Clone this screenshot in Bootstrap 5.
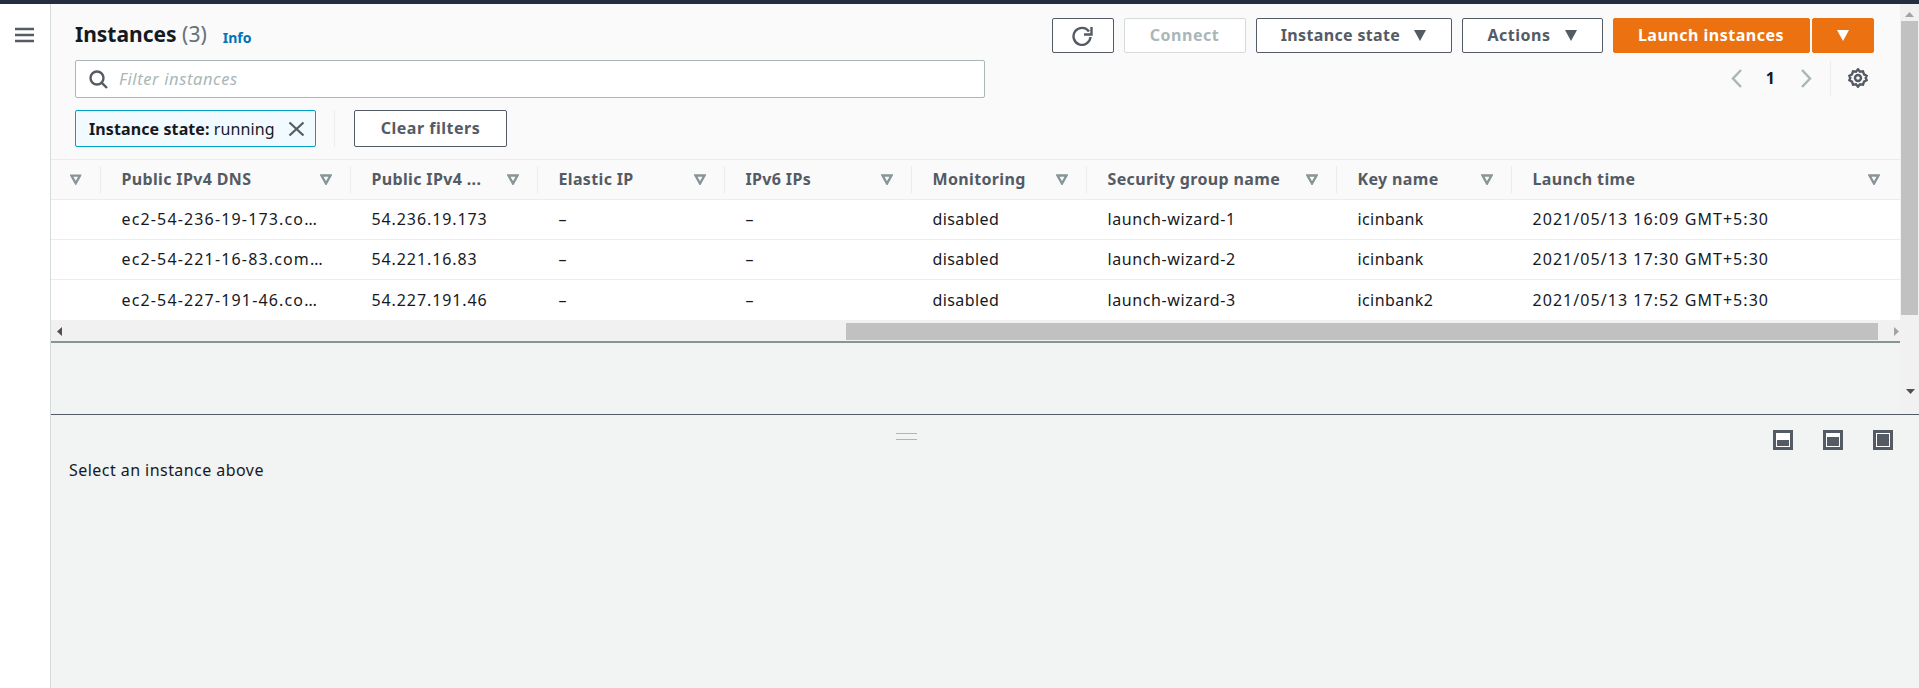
<!DOCTYPE html>
<html lang="en">
<head>
    <meta charset="UTF-8">
    <title>Instances</title>
    <link href="https://cdn.jsdelivr.net/npm/bootstrap@5.3.3/dist/css/bootstrap.min.css" rel="stylesheet">
    <style>
        html, body { height: 688px; overflow: hidden; }
        body { font-family: "Noto Sans", "Liberation Sans", sans-serif; font-size: 16px; letter-spacing: .4px; color: #16191f; background: #fff; }
        .top-strip { height: 4px; background: #232f3e; }
        .app-shell { height: 684px; }
        .side-nav { width: 51px; background: #fff; border-right: 1px solid #d5dbdb; padding: 17px 0 0 15px; }
        .main-area { min-width: 0; }
        .upper-pane { height: 410px; }
        .list-area { min-width: 0; background: #f2f3f3; }
        .list-head { height: 156px; background: #fafafa; padding: 14px 26px 0 24px; border-bottom: 1px solid #eaeded; }
        .head-row { height: 35px; }
        .page-title { font-size: 21px; font-weight: 700; line-height: 30px; margin: 0 0 3px; letter-spacing: 0; }
        .page-title span { font-weight: 400; color: #687078; }
        .info-link { font-size: 14px; font-weight: 700; color: #0073bb; text-decoration: none; margin-left: 16px; padding-top: 3px; letter-spacing: 0; }
        .btn-gap { gap: 10px; }
        .aws-btn { height: 35px; border: 1px solid #545b64; border-radius: 2px; background: #fff; color: #545b64; font-weight: 700; font-size: 16px; letter-spacing: .5px; padding: 0 0 2px; display: inline-flex; align-items: center; justify-content: center; gap: 14px; white-space: nowrap; }
        .aws-btn svg { margin-top: 2px; }
        .aws-btn.is-off { border-color: #d5dbdb; color: #aab7b8; }
        .aws-btn.is-orange { background: #ec7211; border-color: #ec7211; color: #fff; }
        .w-refresh { width: 62px; }
        .w-connect { width: 122px; }
        .w-state { width: 196px; letter-spacing: .35px; }
        .w-actions { width: 141px; }
        .w-launch { width: 197px; margin-right: 2px; }
        .w-drop { width: 62px; }
        .filter-row { margin-top: 7px; height: 38px; }
        .filter-box { width: 910px; height: 38px; border: 1px solid #aab7b8; border-radius: 2px; background: #fff; padding-left: 13px; gap: 11px; color: #aab7b8; font-style: italic; font-size: 16.5px; letter-spacing: .6px; }
        .pager { height: 36px; padding-right: 6px; }
        .pager-num { width: 22px; text-align: center; font-weight: 700; color: #16191f; margin: 0 19.5px 0 17.5px; }
        .pager-sep { width: 1px; height: 35px; background: #eaeded; margin: 0 17px 0 17.5px; }
        .chips-row { margin-top: 12px; height: 37px; }
        .filter-chip { width: 241px; height: 37px; border: 1px solid #00a1c9; border-radius: 2px; background: #f1faff; padding-left: 13px; gap: 13px; white-space: nowrap; letter-spacing: .1px; }
        .filter-chip b { font-weight: 700; }
        .chip-sep { width: 1px; height: 37px; background: #eaeded; margin: 0 19px 0 18px; }
        .w-clear { width: 153px; height: 37px; }
        .inst-table { table-layout: fixed; width: 1848.5px; margin: 0; --bs-table-bg: #fff; }
        .inst-table th, .inst-table td { padding: 0; border-color: #eaeded; overflow: hidden; white-space: nowrap; vertical-align: middle; }
        .inst-table thead th { height: 39px; background: #fafafa; color: #545b64; font-weight: 700; font-size: 16px; letter-spacing: .35px; border-bottom: 1px solid #eaeded; }
        .inst-table tbody td { height: 40px; color: #16191f; font-weight: 400; padding-left: 21px; }
        .inst-table tbody tr:last-child td { height: 41px; border-bottom: 0; }
        .inst-table tbody td.dns-cell { letter-spacing: 1.15px; }
        .inst-table tbody td.ip-cell { letter-spacing: .9px; }
        .inst-table tbody td.date-cell { letter-spacing: 1.05px; }
        .inst-table tbody td.sg-cell { letter-spacing: .6px; }
        .col-check { width: 49.5px; }
        .col-wide { width: 250px; }
        .col-mid { width: 187px; }
        .col-short { width: 175px; }
        .head-cell { height: 27px; padding: 0 18px 0 21px; border-right: 1px solid #eaeded; }
        .head-cell.no-sep { border-right: 0; padding-right: 20px; }
        .head-cell.first-cell { padding: 0 18px 0 19px; justify-content: center; }
        .hbar { height: 23px; background: #f1f1f1; border-bottom: 2px solid #879596; padding-top: 2px; padding-bottom: 1px; }
        .hbar-thumb { width: 1031.5px; height: 17px; background: #c1c1c1; margin-left: 784px; margin-right: 10px; }
        .hbar-arrow { width: 5px; height: 9px; margin-left: 6px; }
        .vbar { width: 19.5px; background: #f1f1f1; padding: 8px 0 0 1.5px; }
        .vbar-thumb { width: 17px; height: 294px; background: #c1c1c1; margin-top: 4px; }
        .vbar-down { margin-top: 74px; margin-left: 5px; }
        .lower-pane { height: 274px; background: #f2f3f3; border-top: 1px solid #545b64; padding: 15px 26px 0 18px; }
        .pane-top { height: 20px; }
        .drag-grip { width: 21px; height: 7px; border-top: 1px solid #aab7b8; border-bottom: 1px solid #aab7b8; margin: 3px 0 0 827px; }
        .pane-tools { gap: 30px; }
        .empty-msg { margin-top: 8px; color: #16191f; letter-spacing: .45px; }
    </style>
</head>
<body>
<svg width="0" height="0" class="d-none">
    <symbol id="caretFill" viewBox="0 0 12 11"><path d="M0 0h12L6 11z" fill="currentColor"/></symbol>
    <symbol id="caretOpen" viewBox="0 0 12 11"><path d="M1.5 1.5h9L6 9.5z" fill="none" stroke="#879596" stroke-width="2.4"/></symbol>
</svg>

<div class="top-strip"></div>
<div class="app-shell d-flex">
    <div class="side-nav flex-shrink-0">
        <svg width="19" height="16" viewBox="0 0 19 16"><path d="M0 2h19M0 8h19M0 14h19" stroke="#545b64" stroke-width="2.5"/></svg>
    </div>
    <div class="main-area flex-grow-1">
        <div class="upper-pane d-flex">
            <div class="list-area flex-grow-1">
                <div class="list-head">
                    <div class="head-row d-flex justify-content-between align-items-center">
                        <div class="d-flex align-items-center">
                            <h1 class="page-title">Instances <span>(3)</span></h1>
                            <a href="#" class="info-link">Info</a>
                        </div>
                        <div class="d-flex btn-gap">
                            <button class="aws-btn w-refresh" type="button">
                                <svg width="21" height="20" viewBox="0 0 21 20" fill="none" stroke="#545b64" stroke-width="2.4"><path d="M17 5.500A8.500 8.500 0 1 0 18.500 11"/><path d="M19.500 1v7.500H12"/></svg>
                            </button>
                            <button class="aws-btn is-off w-connect" type="button">Connect</button>
                            <button class="aws-btn w-state" type="button">Instance state <svg width="12" height="11"><use href="#caretFill"/></svg></button>
                            <button class="aws-btn w-actions" type="button">Actions <svg width="12" height="11"><use href="#caretFill"/></svg></button>
                            <div class="d-flex">
                                <button class="aws-btn is-orange w-launch" type="button">Launch instances</button>
                                <button class="aws-btn is-orange w-drop" type="button"><svg width="12" height="11"><use href="#caretFill"/></svg></button>
                            </div>
                        </div>
                    </div>
                    <div class="filter-row d-flex justify-content-between align-items-start">
                        <div class="filter-box d-flex align-items-center">
                            <svg width="19" height="19" viewBox="0 0 19 19" fill="none" stroke="#545b64" stroke-width="2.4"><circle cx="8" cy="8" r="6.500"/><path d="M12.800 12.800 18 18"/></svg>
                            <span>Filter instances</span>
                        </div>
                        <div class="pager d-flex align-items-center">
                            <svg width="11" height="19" viewBox="0 0 11 19" fill="none" stroke="#aab7b8" stroke-width="2.500"><path d="M10 1 2 9.500 10 18"/></svg>
                            <span class="pager-num">1</span>
                            <svg width="11" height="19" viewBox="0 0 11 19" fill="none" stroke="#aab7b8" stroke-width="2.500"><path d="M1 1l8 8.500L1 18"/></svg>
                            <span class="pager-sep"></span>
                            <svg width="20" height="20" viewBox="0 0 20 20" fill="none" stroke="#545b64" stroke-width="2.400"><path d="M10 1.300l2 2.500 3-.4 1 2.900 2.700 1.500-1 2.200 1 2.200-2.700 1.500-1 2.900-3-.4-2 2.500-2-2.500-3 .4-1-2.900L1.300 12.200l1-2.200-1-2.200L4 6.300l1-2.900 3 .4z"/><circle cx="10" cy="10" r="3"/></svg>
                        </div>
                    </div>
                    <div class="chips-row d-flex align-items-center">
                        <div class="filter-chip d-flex align-items-center">
                            <span><b>Instance state:</b> running</span>
                            <svg width="17" height="16" viewBox="0 0 17 16" fill="none" stroke="#545b64" stroke-width="2.200"><path d="M1.500 1.500l14 13M15.500 1.500l-14 13"/></svg>
                        </div>
                        <span class="chip-sep"></span>
                        <button class="aws-btn w-clear" type="button">Clear filters</button>
                    </div>
                </div>
                <table class="table inst-table">
                    <colgroup>
                        <col class="col-check"><col class="col-wide"><col class="col-mid"><col class="col-mid"><col class="col-mid"><col class="col-short"><col class="col-wide"><col class="col-short"><col>
                    </colgroup>
                    <thead>
                        <tr>
                            <th><div class="head-cell first-cell d-flex align-items-center"><svg width="12" height="11"><use href="#caretOpen"/></svg></div></th>
                            <th><div class="head-cell d-flex align-items-center justify-content-between">Public IPv4 DNS <svg width="12" height="11"><use href="#caretOpen"/></svg></div></th>
                            <th><div class="head-cell d-flex align-items-center justify-content-between">Public IPv4 ... <svg width="12" height="11"><use href="#caretOpen"/></svg></div></th>
                            <th><div class="head-cell d-flex align-items-center justify-content-between">Elastic IP <svg width="12" height="11"><use href="#caretOpen"/></svg></div></th>
                            <th><div class="head-cell d-flex align-items-center justify-content-between">IPv6 IPs <svg width="12" height="11"><use href="#caretOpen"/></svg></div></th>
                            <th><div class="head-cell d-flex align-items-center justify-content-between">Monitoring <svg width="12" height="11"><use href="#caretOpen"/></svg></div></th>
                            <th><div class="head-cell d-flex align-items-center justify-content-between">Security group name <svg width="12" height="11"><use href="#caretOpen"/></svg></div></th>
                            <th><div class="head-cell d-flex align-items-center justify-content-between">Key name <svg width="12" height="11"><use href="#caretOpen"/></svg></div></th>
                            <th><div class="head-cell no-sep d-flex align-items-center justify-content-between">Launch time <svg width="12" height="11"><use href="#caretOpen"/></svg></div></th>
                        </tr>
                    </thead>
                    <tbody>
                        <tr><td></td><td class="dns-cell">ec2-54-236-19-173.co…</td><td class="ip-cell">54.236.19.173</td><td>–</td><td>–</td><td>disabled</td><td class="sg-cell">launch-wizard-1</td><td>icinbank</td><td class="date-cell">2021/05/13 16:09 GMT+5:30</td></tr>
                        <tr><td></td><td class="dns-cell">ec2-54-221-16-83.com…</td><td class="ip-cell">54.221.16.83</td><td>–</td><td>–</td><td>disabled</td><td class="sg-cell">launch-wizard-2</td><td>icinbank</td><td class="date-cell">2021/05/13 17:30 GMT+5:30</td></tr>
                        <tr><td></td><td class="dns-cell">ec2-54-227-191-46.co…</td><td class="ip-cell">54.227.191.46</td><td>–</td><td>–</td><td>disabled</td><td class="sg-cell">launch-wizard-3</td><td>icinbank2</td><td class="date-cell">2021/05/13 17:52 GMT+5:30</td></tr>
                    </tbody>
                </table>
                <div class="hbar d-flex align-items-center">
                    <svg class="hbar-arrow" viewBox="0 0 5 9"><path d="M5 0v9L0 4.500z" fill="#505050"/></svg>
                    <div class="hbar-thumb"></div>
                    <svg class="hbar-arrow" viewBox="0 0 5 9"><path d="M0 0v9l5-4.500z" fill="#a3a3a3"/></svg>
                </div>
            </div>
            <div class="vbar flex-shrink-0">
                <svg class="d-block ms-1" width="9" height="5" viewBox="0 0 9 5"><path d="M0 5h9L4.500 0z" fill="#a3a3a3"/></svg>
                <div class="vbar-thumb"></div>
                <svg class="vbar-down d-block" width="9" height="5" viewBox="0 0 9 5"><path d="M0 0h9L4.500 5z" fill="#505050"/></svg>
            </div>
        </div>
        <div class="lower-pane">
            <div class="pane-top d-flex justify-content-between">
                <div class="drag-grip"></div>
                <div class="pane-tools d-flex">
                    <svg width="20" height="20" viewBox="0 0 20 20"><rect x="1.500" y="1.500" width="17" height="17" fill="#fff" stroke="#545b64" stroke-width="3"/><rect x="4" y="10" width="12" height="6" fill="#545b64"/></svg>
                    <svg width="20" height="20" viewBox="0 0 20 20"><rect x="1.500" y="1.500" width="17" height="17" fill="#fff" stroke="#545b64" stroke-width="3"/><rect x="4" y="7" width="12" height="9" fill="#545b64"/></svg>
                    <svg width="20" height="20" viewBox="0 0 20 20"><rect x="1.500" y="1.500" width="17" height="17" fill="#fff" stroke="#545b64" stroke-width="3"/><rect x="4" y="4" width="12" height="12" fill="#545b64"/></svg>
                </div>
            </div>
            <div class="empty-msg">Select an instance above</div>
        </div>
    </div>
</div>
<script src="https://cdn.jsdelivr.net/npm/bootstrap@5.3.3/dist/js/bootstrap.bundle.min.js"></script>
</body>
</html>
